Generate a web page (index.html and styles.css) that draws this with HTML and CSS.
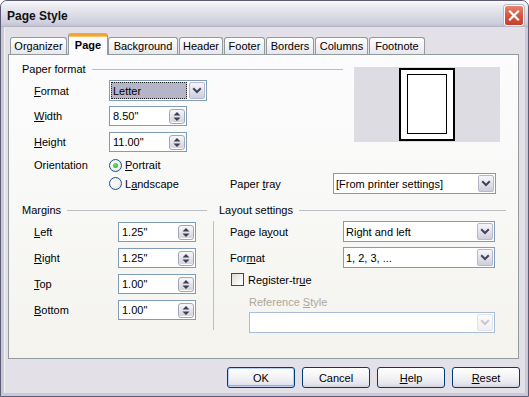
FILE: index.html
```html
<!DOCTYPE html>
<html>
<head>
<meta charset="utf-8">
<title>Page Style</title>
<link rel="stylesheet" href="styles.css">
</head>
<body>
<div class="window">
  <div class="titlebar">
    <span class="title">Page Style</span>
    <span class="close"><svg width="18" height="19" viewBox="0 0 18 19"><path d="M5 5.5L13 13.5M13 5.5L5 13.5" stroke="#fff" stroke-width="2.2" stroke-linecap="square"/></svg></span>
  </div>
  <div class="client">
    <div class="tabs">
      <div class="tab t1">Organizer</div>
      <div class="tab sel t2">Page</div>
      <div class="tab t3">Background</div>
      <div class="tab t4">Header</div>
      <div class="tab t5">Footer</div>
      <div class="tab t6">Borders</div>
      <div class="tab t7">Columns</div>
      <div class="tab t8">Footnote</div>
    </div>
    <div class="panel">
      <div class="top">
        <div class="paper">
          <div class="legend">Paper format</div>
          <div class="row r-combo">
            <span class="lbl"><u>F</u>ormat</span>
            <div class="combo focus w-format"><span class="val">Letter</span><span class="dd"><svg width="10" height="7" viewBox="0 0 10 7"><path d="M1.2 1.2L5 5L8.8 1.2" fill="none" stroke="#43435a" stroke-width="2"/></svg></span></div>
          </div>
          <div class="row r-field r5">
            <span class="lbl"><u>W</u>idth</span>
            <div class="spin"><span>8.50"</span><span class="sb"><svg width="12" height="11" viewBox="0 0 12 11"><path d="M2.5 4.5L6 1L9.5 4.5Z M2.5 6.5L6 10L9.5 6.5Z" fill="#3f3f55"/></svg></span></div>
          </div>
          <div class="row r-field r6">
            <span class="lbl"><u>H</u>eight</span>
            <div class="spin"><span>11.00"</span><span class="sb"><svg width="12" height="11" viewBox="0 0 12 11"><path d="M2.5 4.5L6 1L9.5 4.5Z M2.5 6.5L6 10L9.5 6.5Z" fill="#3f3f55"/></svg></span></div>
          </div>
          <div class="row r-radio">
            <span class="lbl">Orientation</span>
            <span class="radio on"></span><span class="rtext"><u>P</u>ortrait</span>
          </div>
        </div>
        <div class="preview">
          <div class="page"><div class="inner"></div></div>
        </div>
      </div>
      <div class="row r-land">
        <span class="lbl"></span>
        <span class="land"><span class="radio"></span><span class="rtext">L<u>a</u>ndscape</span></span>
        <span class="lbl2">Paper <u>t</u>ray</span>
        <div class="combo w-tray"><span class="val">[From printer settings]</span><span class="dd"><svg width="10" height="7" viewBox="0 0 10 7"><path d="M1.2 1.2L5 5L8.8 1.2" fill="none" stroke="#43435a" stroke-width="2"/></svg></span></div>
      </div>
      <div class="bottom">
        <div class="margins">
          <div class="legend">Margins</div>
          <div class="row m-row m-first"><span class="lbl m-lbl"><u>L</u>eft</span><div class="spin"><span>1.25"</span><span class="sb"><svg width="12" height="11" viewBox="0 0 12 11"><path d="M2.5 4.5L6 1L9.5 4.5Z M2.5 6.5L6 10L9.5 6.5Z" fill="#3f3f55"/></svg></span></div></div>
          <div class="row m-row"><span class="lbl m-lbl"><u>R</u>ight</span><div class="spin"><span>1.25"</span><span class="sb"><svg width="12" height="11" viewBox="0 0 12 11"><path d="M2.5 4.5L6 1L9.5 4.5Z M2.5 6.5L6 10L9.5 6.5Z" fill="#3f3f55"/></svg></span></div></div>
          <div class="row m-row"><span class="lbl m-lbl"><u>T</u>op</span><div class="spin"><span>1.00"</span><span class="sb"><svg width="12" height="11" viewBox="0 0 12 11"><path d="M2.5 4.5L6 1L9.5 4.5Z M2.5 6.5L6 10L9.5 6.5Z" fill="#3f3f55"/></svg></span></div></div>
          <div class="row m-row"><span class="lbl m-lbl"><u>B</u>ottom</span><div class="spin"><span>1.00"</span><span class="sb"><svg width="12" height="11" viewBox="0 0 12 11"><path d="M2.5 4.5L6 1L9.5 4.5Z M2.5 6.5L6 10L9.5 6.5Z" fill="#3f3f55"/></svg></span></div></div>
        </div>
        <div class="sep"></div>
        <div class="layout">
          <div class="legend">Layout settings</div>
          <div class="row l-row l-first"><span class="lbl l-lbl">Page la<u>y</u>out</span><div class="combo w-layout"><span class="val">Right and left</span><span class="dd"><svg width="10" height="7" viewBox="0 0 10 7"><path d="M1.2 1.2L5 5L8.8 1.2" fill="none" stroke="#43435a" stroke-width="2"/></svg></span></div></div>
          <div class="row l-row"><span class="lbl l-lbl">For<u>m</u>at</span><div class="combo w-layout"><span class="val">1, 2, 3, ...</span><span class="dd"><svg width="10" height="7" viewBox="0 0 10 7"><path d="M1.2 1.2L5 5L8.8 1.2" fill="none" stroke="#43435a" stroke-width="2"/></svg></span></div></div>
          <div class="row c-row"><span class="check"></span><span class="ctext">Register-tr<u>u</u>e</span></div>
          <div class="ref-lbl">Reference <u>S</u>tyle</div>
          <div class="combo disabled w-ref"><span class="val"></span><span class="dd"><svg width="10" height="7" viewBox="0 0 10 7"><path d="M1.2 1.2L5 5L8.8 1.2" fill="none" stroke="#c8c8d4" stroke-width="2"/></svg></span></div>
        </div>
      </div>
    </div>
    <div class="buttons">
      <span class="btn def">OK</span>
      <span class="btn">Cancel</span>
      <span class="btn"><u>H</u>elp</span>
      <span class="btn"><u>R</u>eset</span>
    </div>
  </div>
</div>
</body>
</html>
```

FILE: styles.css
```css
* { box-sizing: border-box; }
html, body { margin: 0; padding: 0; }
body {
  width: 529px;
  height: 397px;
  overflow: hidden;
  background: #ffffff;
  font-family: "Liberation Sans", Arial, sans-serif;
  font-size: 11px;
  color: #000;
}
u { text-decoration: underline; text-underline-offset: 1px; }

.window {
  width: 529px;
  height: 397px;
  display: flex;
  flex-direction: column;
  border: 1px solid #5b5b76;
  border-radius: 7px 7px 0 0;
  background: #c9c9d8;
  overflow: hidden;
}

.titlebar {
  height: 26px;
  flex: none;
  display: flex;
  align-items: flex-start;
  justify-content: space-between;
  padding: 0 4px 0 6px;
  background: linear-gradient(#fbfbfd 0%, #ececf2 18%, #dcdce6 55%, #d0d0de 85%, #c2c2d2 100%);
  border-bottom: 1px solid #b4b4c6;
}
.title {
  margin-top: 8px;
  line-height: 14px;
  font-weight: bold;
  font-size: 12px;
  color: #111;
}
.close {
  margin-top: 4px;
  width: 20px;
  height: 21px;
  border: 1px solid #fff;
  border-radius: 3px;
  background: linear-gradient(#e9846f 0%, #d65a44 45%, #c53f2b 100%);
  box-shadow: 0 0 0 1px #b9b9c8;
  display: flex;
  align-items: center;
  justify-content: center;
}

.client {
  flex: 1;
  margin: 0 3px 3px 3px;
  background: #e3e0e7;
  padding: 6px 6px 0 4px;
  box-shadow: inset 1px 0 0 #f2f2f6;
}

/* tabs */
.tabs {
  display: flex;
  align-items: flex-end;
  padding-left: 2px;
}
.tab {
  height: 17px;
  margin-right: 1px;
  border: 1px solid #919b9c;
  border-bottom: none;
  border-radius: 3px 3px 0 0;
  background: linear-gradient(#ffffff 0%, #f3f3f6 50%, #e6e6ee 100%);
  text-align: center;
  line-height: 16px;
  white-space: nowrap;
}
.tab.sel {
  position: relative;
  z-index: 2;
  height: 22px;
  margin-right: 0;
  margin-bottom: -1px;
  border-top: 3px solid #f0a43a;
  box-shadow: inset 0 1px 0 #ffc763;
  background: #fcfcfe;
  font-weight: bold;
  line-height: 18px;
}
.t1 { width: 57px; }
.t2 { width: 40px; }
.t3 { width: 70px; }
.t4 { width: 44px; }
.t5 { width: 41px; }
.t6 { width: 48px; }
.t7 { width: 53px; }
.t8 { width: 56px; }

.panel {
  height: 305px;
  border: 1px solid #919b9c;
  background: linear-gradient(#fcfcfe 0%, #f8f8f6 50%, #f4f3ee 100%);
  padding-left: 13px;
}

.legend {
  display: flex;
  align-items: center;
  height: 13px;
  line-height: 13px;
  white-space: nowrap;
}
.legend::after {
  content: "";
  flex: 1;
  height: 1px;
  background: #bdbdc6;
  margin-left: 6px;
}

.top { display: flex; }
.paper { width: 321px; }
.paper .legend { margin-top: 8px; }

.row { display: flex; align-items: center; white-space: nowrap; }
.lbl { padding-left: 12px; width: 87px; flex: none; }

.r-combo { height: 21px; margin-top: 4px; }
.r-field { height: 20px; }
.r5 { margin-top: 5px; }
.r6 { margin-top: 6px; }
.r-radio { height: 14px; margin-top: 6px; }

.combo {
  height: 21px;
  border: 1px solid #7f9db9;
  background: #fff;
  display: flex;
  align-items: center;
  padding: 0 1px 0 2px;
  flex: none;
}
.combo .val { flex: 1; white-space: nowrap; overflow: hidden; }
.combo.focus { padding-left: 1px; }
.combo.focus .val {
  align-self: stretch;
  margin: 1px 2px 1px 0;
  background: #b4b5c9;
  outline: 1px dotted #222;
  outline-offset: -1px;
  display: flex;
  align-items: center;
  padding-left: 2px;
}
.dd {
  width: 16px;
  height: 17px;
  flex: none;
  border: 1px solid #b8b8cc;
  border-radius: 2px;
  background: linear-gradient(#f6f6f9 0%, #e3e3ec 50%, #cdcddc 100%);
  display: flex;
  align-items: center;
  justify-content: center;
}
.combo.disabled { border-color: #a9bdd4; }
.combo.disabled .dd {
  border-color: #e2e2ea;
  background: linear-gradient(#fbfbfc, #f0f0f4);
}

.w-format { width: 98px; }
.w-tray { width: 163px; }
.w-layout { width: 152px; }
.w-ref { width: 246px; margin-left: 30px; margin-top: 3px; }

.spin {
  width: 78px;
  height: 20px;
  flex: none;
  border: 1px solid #7f9db9;
  background: #fff;
  display: flex;
  align-items: center;
  justify-content: space-between;
  padding: 0 1px 0 3px;
}
.sb {
  width: 16px;
  height: 15px;
  border: 1px solid #a3a3ba;
  border-radius: 3px;
  background: linear-gradient(#f7f7fa 0%, #e2e2ea 55%, #d0d0dc 100%);
  display: flex;
  align-items: center;
  justify-content: center;
  box-shadow: inset 0 -1px 0 #fff;
}

.radio {
  width: 13px;
  height: 13px;
  flex: none;
  border: 1px solid #1c5180;
  border-radius: 50%;
  background: radial-gradient(circle at 40% 40%, #ffffff 0%, #f2f2ee 50%, #d8d8d0 100%);
  display: inline-flex;
  align-items: center;
  justify-content: center;
}
.radio.on::after {
  content: "";
  width: 5px;
  height: 5px;
  border-radius: 50%;
  background: radial-gradient(circle at 40% 40%, #6ee86e, #21a121);
}
.rtext { margin-left: 3px; }

.r-land { height: 21px; margin-top: 1px; }
.land { width: 121px; flex: none; display: flex; align-items: center; }
.lbl2 { width: 103px; flex: none; }

.preview {
  margin: 12px 0 0 11px;
  width: 146px;
  height: 75px;
  background: #dddce3;
  display: flex;
  justify-content: center;
  align-items: center;
}
.page {
  width: 56px;
  height: 73px;
  border: 2px solid #000;
  background: #fff;
  padding: 4px 0 0 6px;
}
.inner {
  width: 40px;
  height: 60px;
  border: 1px solid #000;
}

.bottom { display: flex; margin-top: 10px; }
.margins { width: 185px; flex: none; }
.m-row { height: 20px; margin-top: 6px; }
.m-first { margin-top: 5px; }
.m-lbl { width: 96px; }
.sep {
  width: 1px;
  height: 109px;
  margin: 17px 5px 0 6px;
  background: #bdbdc6;
  flex: none;
}
.layout { width: 287px; flex: none; }
.l-row { height: 21px; margin-top: 5px; }
.l-first { margin-top: 4px; }
.l-lbl { padding-left: 11px; width: 124px; }
.c-row { height: 13px; margin-top: 5px; padding-left: 12px; }
.check {
  width: 13px;
  height: 13px;
  flex: none;
  border: 1px solid #1c5180;
  background: linear-gradient(135deg, #dcdcd6 0%, #f4f4f0 60%, #ffffff 100%);
}
.ctext { margin-left: 4px; }
.ref-lbl {
  margin-top: 10px;
  padding-left: 30px;
  height: 13px;
  line-height: 13px;
  color: #aca899;
}

.buttons {
  display: flex;
  justify-content: flex-end;
  gap: 7px;
  margin-top: 8px;
  margin-right: -1px;
}
.btn {
  width: 68px;
  height: 21px;
  border: 1px solid #003c74;
  border-radius: 3px;
  background: linear-gradient(#ffffff 0%, #f4f4f7 45%, #e4e4ec 85%, #d2d2de 100%);
  display: flex;
  align-items: center;
  justify-content: center;
}
.btn.def {
  box-shadow: inset 0 0 0 1px #bcd0f4, inset 0 -1px 0 1px #8fb0e8;
}
```
